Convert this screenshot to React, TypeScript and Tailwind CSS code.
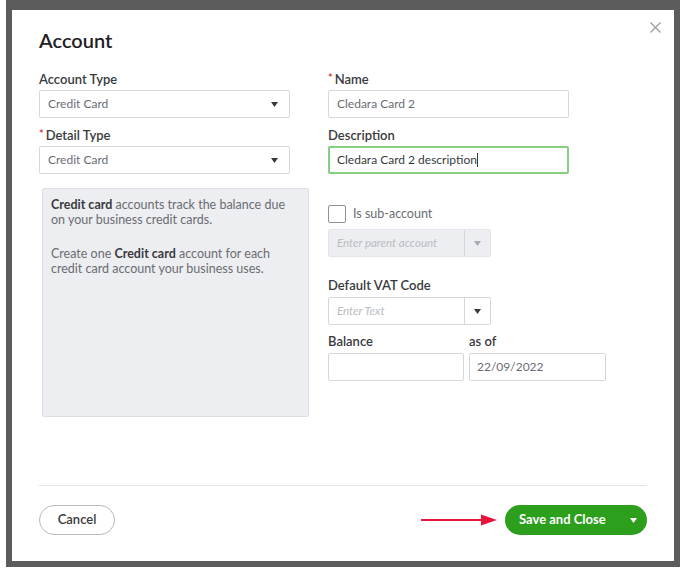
import React from "react";

const Caret = ({ color = "#393a3d" }: { color?: string }) => (
  <svg width="7" height="5" viewBox="0 0 7 5">
    <path d="M0 0 L7 0 L3.5 5 Z" fill={color} />
  </svg>
);

const Label = ({ children, req }: { children: React.ReactNode; req?: boolean }) => (
  <div className="h-4 flex items-center text-[13px] leading-4 font-semibold text-[#393a3d]">
    {req && <span className="text-[#d52b1e] text-[11px] mr-[2px] -mt-[2px]">*</span>}
    {children}
  </div>
);

export default function App() {
  return (
    <div className="w-[687px] h-[573px] bg-white overflow-hidden" style={{ fontFamily: "Lato, 'Open Sans', sans-serif" }}>
      <div className="ml-[6px] w-[674px] h-[567px] bg-[#5c5c5c] pt-[10px] px-[6px] pb-[6px]">
        <div className="relative h-full bg-white flex flex-col px-[27px]">
          <button className="absolute right-[13px] top-[12px] w-[11px] h-[11px]">
            <svg width="11" height="11" viewBox="0 0 11 11">
              <path d="M0.5 0.5 L10.5 10.5 M10.5 0.5 L0.5 10.5" stroke="#9a9ca1" strokeWidth="1.3" />
            </svg>
          </button>
          <h1 className="mt-[18px] text-[20px] leading-6 font-semibold text-[#1f2024]">Account</h1>
          <div className="mt-[19px] flex gap-[38px]">
            {/* Left column */}
            <div className="w-[251px] flex flex-col">
              <Label>Account Type</Label>
              <div className="mt-[3px] h-[28px] border border-[#d4d7dc] rounded-[2px] flex items-center justify-between pl-[8px] pr-[11px] text-[12px] text-[#6b6c72]">
                <span>Credit Card</span>
                <Caret />
              </div>
              <div className="mt-[9px]">
                <Label req>Detail Type</Label>
              </div>
              <div className="mt-[3px] h-[28px] border border-[#d4d7dc] rounded-[2px] flex items-center justify-between pl-[8px] pr-[11px] text-[12px] text-[#6b6c72]">
                <span>Credit Card</span>
                <Caret />
              </div>
              <div className="mt-[14px] ml-[3px] w-[267px] h-[229px] bg-[#eceef1] border border-[#dcdfe3] rounded-[2px] px-[8px] pt-[8px] text-[12.5px] leading-[15px] text-[#6b6c72]">
                <p>
                  <span className="font-bold text-[#393a3d]">Credit card</span> accounts track the balance due on your business credit cards.
                </p>
                <p className="mt-[19px]">
                  Create one <span className="font-bold text-[#393a3d]">Credit card</span> account for each credit card account your business uses.
                </p>
              </div>
            </div>
            {/* Right column */}
            <div className="w-[241px] flex flex-col">
              <Label req>Name</Label>
              <div className="mt-[3px] h-[28px] border border-[#d4d7dc] rounded-[2px] flex items-center pl-[8px] text-[12px] text-[#6b6c72]">
                Cledara Card 2
              </div>
              <div className="mt-[9px]">
                <Label>Description</Label>
              </div>
              <div className="mt-[3px] h-[28px] border-2 border-[#86cf82] rounded-[2px] flex items-center pl-[7px] text-[12px] text-[#393a3d]">
                <span>Cledara Card 2 description</span>
                <span className="inline-block w-px h-[14px] bg-[#393a3d]" />
              </div>
              <div className="mt-[31px] flex items-center h-[18px]">
                <div className="w-[18px] h-[18px] border border-[#8d9096] rounded-[2px] bg-white" />
                <span className="ml-[7px] text-[12.5px] text-[#6b6c72]">Is sub-account</span>
              </div>
              <div className="mt-[6px] w-[163px] h-[28px] bg-[#eceef1] border border-[#e3e5e8] rounded-[2px] flex">
                <div className="flex-1 flex items-center pl-[8px] text-[11.5px] italic text-[#b9bcc1]">Enter parent account</div>
                <div className="w-[26px] border-l border-[#d4d7dc] flex items-center justify-center">
                  <Caret color="#a8abb0" />
                </div>
              </div>
              <div className="mt-[20px]">
                <Label>Default VAT Code</Label>
              </div>
              <div className="mt-[4px] w-[163px] h-[28px] bg-white border border-[#d4d7dc] rounded-[2px] flex">
                <div className="flex-1 flex items-center pl-[8px] text-[11.5px] italic text-[#b9bcc1]">Enter Text</div>
                <div className="w-[26px] border-l border-[#d4d7dc] flex items-center justify-center">
                  <Caret />
                </div>
              </div>
              <div className="mt-[8px] flex gap-[5px] w-[278px] shrink-0">
                <div className="w-[136px] shrink-0">
                  <Label>Balance</Label>
                  <div className="mt-[4px] h-[28px] border border-[#d4d7dc] rounded-[2px]" />
                </div>
                <div className="w-[137px] shrink-0">
                  <Label>
                    <span className="font-semibold">as of</span>
                  </Label>
                  <div className="mt-[4px] h-[28px] border border-[#d4d7dc] rounded-[2px] flex items-center pl-[7px] text-[12px] text-[#6b6c72]">
                    22/09/2022
                  </div>
                </div>
              </div>
            </div>
          </div>
          <div className="flex-1" />
          <div className="h-px bg-[#e3e5e8]" />
          <div className="mt-[19px] mb-[26px] flex items-center justify-between h-[30px]">
            <button className="w-[76px] h-[30px] rounded-full border border-[#b6b8bc] text-[13px] font-semibold text-[#393a3d] flex items-center justify-center">
              Cancel
            </button>
            <div className="flex items-center">
              <svg width="78" height="14" viewBox="0 0 78 14" className="mr-[6px]">
                <path d="M0 7 L62 7" stroke="#e8163d" strokeWidth="2" />
                <path d="M60 1.5 L76 7 L60 12.5 Z" fill="#e8163d" />
              </svg>
              <button className="w-[142px] h-[30px] rounded-full bg-[#2ca01c] text-white text-[13px] font-bold flex items-center pl-[14px] pr-[10px] justify-between">
                <span>Save and Close</span>
                <Caret color="#ffffff" />
              </button>
            </div>
          </div>
        </div>
      </div>
    </div>
  );
}
